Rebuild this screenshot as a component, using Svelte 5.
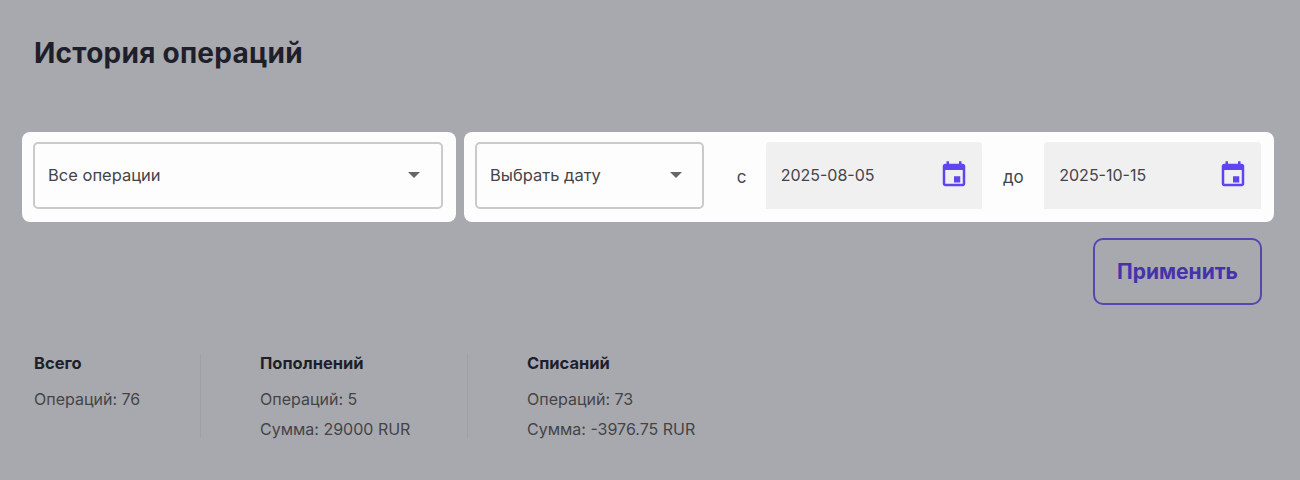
<script>
  const stats = [
    { title: 'Всего', lines: ['Операций: 76'] },
    { title: 'Пополнений', lines: ['Операций: 5', 'Сумма: 29000 RUR'] },
    { title: 'Списаний', lines: ['Операций: 73', 'Сумма: -3976.75 RUR'] }
  ];
</script>

{#snippet calendar()}
  <svg class="cal" viewBox="0 0 24 24" width="30" height="30">
    <path fill="#5f45f0" d="M19 3h-1V1h-2v2H8V1H6v2H5c-1.1 0-2 .9-2 2v14c0 1.1.9 2 2 2h14c1.1 0 2-.9 2-2V5c0-1.1-.9-2-2-2zm0 16H5V8h14v11z"/>
    <path fill="#5f45f0" d="M12 13h5v5h-5z"/>
  </svg>
{/snippet}

{#snippet caret()}
  <span class="caret"></span>
{/snippet}

<main class="page">
  <h1>История операций</h1>

  <div class="filters">
    <div class="panel first">
      <div class="select wide">
        <span>Все операции</span>
        {@render caret()}
      </div>
    </div>
    <div class="panel second">
      <div class="select narrow">
        <span>Выбрать дату</span>
        {@render caret()}
      </div>
      <span class="sep from">с</span>
      <div class="date">
        <span>2025-08-05</span>
        {@render calendar()}
      </div>
      <span class="sep to">до</span>
      <div class="date">
        <span>2025-10-15</span>
        {@render calendar()}
      </div>
    </div>
  </div>

  <div class="actions">
    <button>Применить</button>
  </div>

  <div class="stats">
    {#each stats as s}
      <div class="stat">
        <div class="stat-title">{s.title}</div>
        {#each s.lines as line}
          <div class="stat-line">{line}</div>
        {/each}
      </div>
    {/each}
  </div>
</main>

<style>
  :global(body) {
    margin: 0;
    background: #a8a9ae;
  }

  .page {
    width: 1300px;
    height: 480px;
    box-sizing: border-box;
    padding: 35px 26px 0 22px;
    font-family: Inter, "Noto Sans", sans-serif;
    color: #444448;
    overflow: hidden;
  }

  h1 {
    margin: 0 0 0 12px;
    font-size: 28px;
    line-height: 36px;
    letter-spacing: 0.25px;
    font-weight: 700;
    color: #1f1f2b;
  }

  .filters {
    display: flex;
    gap: 8px;
    margin-top: 61px;
  }

  .panel {
    display: flex;
    align-items: center;
    box-sizing: border-box;
    height: 90px;
    padding: 10px 11px 13px;
    background: #fdfdfd;
    border-radius: 8px;
  }

  .first {
    width: 434px;
  }

  .second {
    width: 810px;
    padding-right: 13px;
  }

  .select {
    display: flex;
    align-items: center;
    justify-content: space-between;
    box-sizing: border-box;
    height: 67px;
    padding: 0 21px 1px 13px;
    border: 2px solid #cacaca;
    border-radius: 5px;
    font-size: 16.5px;
  }

  .wide {
    width: 410px;
  }

  .narrow {
    width: 229px;
    padding-right: 20px;
  }

  .caret {
    width: 0;
    height: 0;
    border-left: 6px solid transparent;
    border-right: 6px solid transparent;
    border-top: 6px solid #66666a;
  }

  .sep {
    box-sizing: border-box;
    width: 62px;
    font-size: 17px;
    text-align: center;
    padding-top: 3px;
  }

  .from {
    padding-left: 14px;
  }

  .date {
    display: flex;
    align-items: center;
    justify-content: space-between;
    box-sizing: border-box;
    width: 217px;
    height: 67px;
    padding: 0 13px 1px 15px;
    background: #f0f0f0;
    border-radius: 4px 4px 0 0;
    font-size: 16px;
  }

  .cal {
    display: block;
  }

  .actions {
    display: flex;
    justify-content: flex-end;
    margin-top: 16px;
    padding-right: 12px;
  }

  button {
    box-sizing: border-box;
    width: 169px;
    height: 67px;
    background: transparent;
    border: 2px solid #5546b0;
    border-radius: 10px;
    color: #4532ad;
    font-family: inherit;
    font-size: 21px;
    font-weight: 700;
  }

  .stats {
    display: flex;
    margin: 49px 0 0 12px;
  }

  .stat {
    box-sizing: border-box;
    height: 84px;
    font-size: 16px;
  }

  .stat + .stat {
    border-left: 1px solid #9fa0a5;
  }

  .stat:nth-child(1) {
    width: 166px;
  }

  .stat:nth-child(2) {
    width: 267px;
    padding-left: 59px;
  }

  .stat:nth-child(3) {
    padding-left: 59px;
  }

  .stat-title {
    font-size: 16.5px;
    font-weight: 700;
    color: #1f1f2b;
    line-height: 18px;
    margin-bottom: 12px;
  }

  .stat-line {
    line-height: 30px;
  }
</style>
